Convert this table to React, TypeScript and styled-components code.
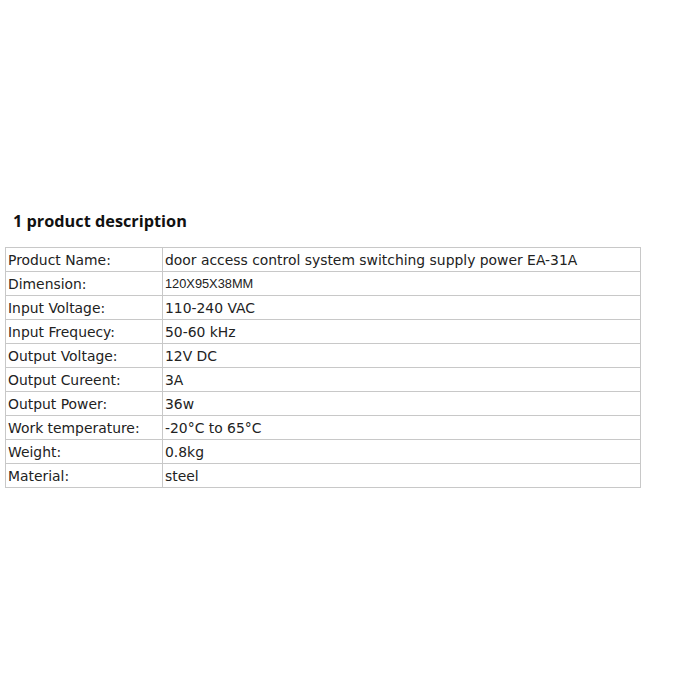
import React from 'react';
import styled, { createGlobalStyle } from 'styled-components';

const GlobalStyle = createGlobalStyle`
  html, body {
    margin: 0;
    padding: 0;
    background: #fff;
  }
`;

const Page = styled.div`
  width: 700px;
  height: 700px;
  padding-top: 209px;
  box-sizing: border-box;
`;

const Title = styled.h2`
  margin: 0 0 14px 13px;
  font-family: 'Open Sans', 'Liberation Sans', sans-serif;
  font-weight: 700;
  font-size: 16.3px;
  line-height: 24px;
  color: #111;
`;

const SpecTable = styled.table`
  margin-left: 5px;
  width: 636px;
  border-collapse: collapse;
  font-family: 'DejaVu Sans', Verdana, sans-serif;
  font-size: 13.9px;
  color: #222;
`;

const Cell = styled.td<{ $label?: boolean; $arial?: boolean }>`
  border: 1px solid #c8c8c8;
  height: 23px;
  padding: 0 1px 0 2px;
  vertical-align: middle;
  width: ${(p) => (p.$label ? '153px' : 'auto')};
  font-family: ${(p) => (p.$arial ? "'Liberation Sans', Arial, sans-serif" : 'inherit')};
  font-size: ${(p) => (p.$arial ? '12.8px' : 'inherit')};
  white-space: nowrap;
`;

const specs: [string, string, boolean?][] = [
  ['Product Name:', 'door access control system switching supply power EA-31A'],
  ['Dimension:', '120X95X38MM', true],
  ['Input Voltage:', '110-240 VAC'],
  ['Input Frequecy:', '50-60 kHz'],
  ['Output Voltage:', '12V DC'],
  ['Output Cureent:', '3A'],
  ['Output Power:', '36w'],
  ['Work temperature:', '-20°C to 65°C'],
  ['Weight:', '0.8kg'],
  ['Material:', 'steel'],
];

export default function App() {
  return (
    <Page>
      <GlobalStyle />
      <Title>1 product description</Title>
      <SpecTable>
        <tbody>
          {specs.map(([label, value, arial]) => (
            <tr key={label}>
              <Cell $label>{label}</Cell>
              <Cell $arial={arial}>{value}</Cell>
            </tr>
          ))}
        </tbody>
      </SpecTable>
    </Page>
  );
}
